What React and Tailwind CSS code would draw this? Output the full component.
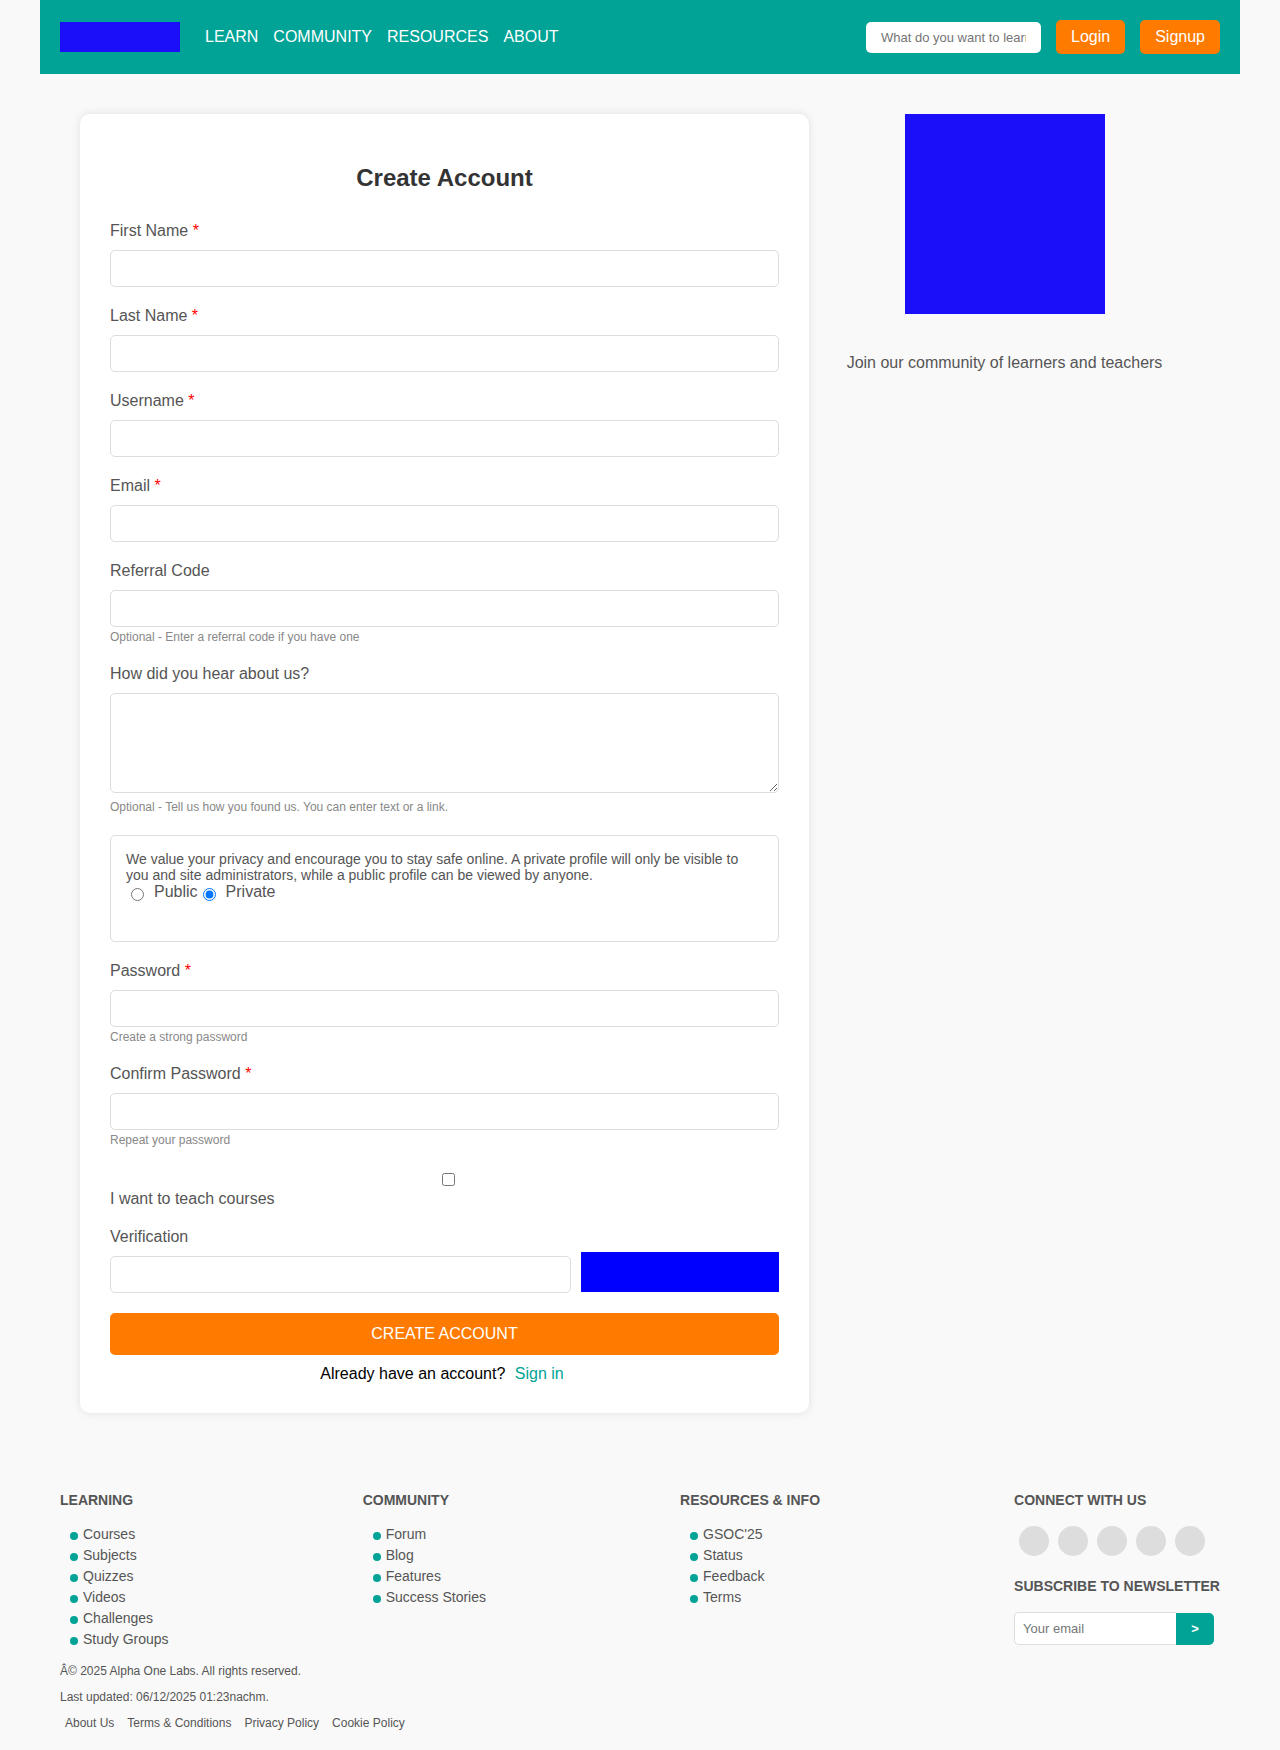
import React from "react";

const NAV_LINKS = ["LEARN", "COMMUNITY", "RESOURCES", "ABOUT"];

const FOOTER_COLUMNS = [
  {
    title: "LEARNING",
    links: ["Courses", "Subjects", "Quizzes", "Videos", "Challenges", "Study Groups"],
  },
  { title: "COMMUNITY", links: ["Forum", "Blog", "Features", "Success Stories"] },
  { title: "RESOURCES & INFO", links: ["GSOC'25", "Status", "Feedback", "Terms"] },
];

const SOCIALS = ["Facebook", "Twitter", "Instagram", "LinkedIn", "GitHub"];

const LEGAL_LINKS = ["About Us", "Terms & Conditions", "Privacy Policy", "Cookie Policy"];

const inputClass =
  "block h-[37px] w-full rounded-[5px] border border-[#dddddd] bg-white px-2.5 text-[13px] text-black";

function Field({ id, label, type = "text", required, hint }) {
  return (
    <div className="mb-5">
      <label htmlFor={id} className="mb-2.5 block">
        {label}
        {required && <span className="text-[#ff0000]"> *</span>}
      </label>
      <input id={id} type={type} required={required} className={inputClass} />
      {hint && <Hint>{hint}</Hint>}
    </div>
  );
}

function Hint({ children }) {
  return <small className="block pt-0.5 text-xs leading-4 text-[#888888]">{children}</small>;
}

function Header() {
  return (
    <header className="flex items-center justify-between bg-[#00a396] p-5 text-white">
      <div className="flex items-center">
        <div role="img" aria-label="Logo" className="h-[30px] w-[120px] bg-[#1b0ff9]" />
        <nav className="ml-[25px] flex gap-[15px]">
          {NAV_LINKS.map((link) => (
            <a key={link} href="#">
              {link}
            </a>
          ))}
        </nav>
      </div>
      <div className="flex items-center gap-[15px]">
        <input
          type="text"
          aria-label="Search"
          placeholder="What do you want to learn?"
          className="h-[31px] w-[175px] rounded-[5px] bg-white px-[15px] text-[13px] text-black placeholder:text-[#757575]"
        />
        <button type="button" className="rounded-[5px] bg-[#ff7b00] px-[15px] py-2">
          Login
        </button>
        <button type="button" className="rounded-[5px] bg-[#ff7b00] px-[15px] py-2">
          Signup
        </button>
      </div>
    </header>
  );
}

function SignupForm() {
  return (
    <form
      onSubmit={(event) => event.preventDefault()}
      className="flex-1 rounded-[10px] bg-white p-[30px] pt-[50px] shadow-[0_0_10px_rgba(0,0,0,0.1)]"
    >
      <h2 className="mb-[30px] text-center text-2xl leading-7 font-bold text-[#333333]">
        Create Account
      </h2>
      <Field id="first-name" label="First Name" required />
      <Field id="last-name" label="Last Name" required />
      <Field id="username" label="Username" required />
      <Field id="email" label="Email" type="email" required />
      <Field
        id="referral"
        label="Referral Code"
        hint="Optional - Enter a referral code if you have one"
      />
      <div className="mb-5">
        <label htmlFor="source" className="mb-2.5 block">
          How did you hear about us?
        </label>
        <textarea
          id="source"
          className="mb-1 block h-[100px] w-full resize rounded-[5px] border border-[#dddddd] bg-white p-2.5 text-[13px] text-black"
        />
        <Hint>Optional - Tell us how you found us. You can enter text or a link.</Hint>
      </div>
      <fieldset className="mb-5 rounded-[5px] border border-[#dddddd] px-[15px] pt-[15px] pb-10">
        <p className="text-sm leading-4">
          We value your privacy and encourage you to stay safe online. A private profile will only
          be visible to you and site administrators, while a public profile can be viewed by anyone.
        </p>
        <div className="flex gap-[5px] pl-[5px]">
          <label className="flex gap-2.5">
            <input type="radio" name="profile" value="public" className="mt-[5px] size-[13px]" />
            Public
          </label>
          <label className="flex gap-2.5">
            <input
              type="radio"
              name="profile"
              value="private"
              defaultChecked
              className="mt-[5px] size-[13px]"
            />
            Private
          </label>
        </div>
      </fieldset>
      <Field
        id="password"
        label="Password"
        type="password"
        required
        hint="Create a strong password"
      />
      <Field
        id="confirm-password"
        label="Confirm Password"
        type="password"
        required
        hint="Repeat your password"
      />
      <div className="mb-5">
        <div className="flex justify-center pt-[5px] pb-1 pl-2">
          <input id="teach" type="checkbox" className="size-[13px]" />
        </div>
        <label htmlFor="teach" className="block">
          I want to teach courses
        </label>
      </div>
      <div className="mb-5 flex items-end gap-2.5">
        <div className="flex-[7]">
          <label htmlFor="verification" className="mb-2.5 block">
            Verification
          </label>
          <input id="verification" type="text" className={inputClass} />
        </div>
        <div
          role="img"
          aria-label="Verification image"
          className="mb-px h-10 flex-[3] bg-[#0000ff]"
        />
      </div>
      <button
        type="submit"
        className="block h-[42px] w-full rounded-[5px] bg-[#ff7b00] text-white"
      >
        CREATE ACCOUNT
      </button>
      <p className="pt-2.5 text-center text-black">
        Already have an account?{" "}
        <a href="#" className="px-[5px] text-[#00a396]">
          Sign in
        </a>
      </p>
    </form>
  );
}

function Footer() {
  return (
    <footer className="px-5 pt-[39px] pb-5 text-sm leading-4">
      <div className="flex items-start justify-between">
        {FOOTER_COLUMNS.map((column) => (
          <section key={column.title}>
            <h4 className="mb-[18px] font-bold">{column.title}</h4>
            <ul className="flex flex-col gap-[5px] pl-2.5">
              {column.links.map((link) => (
                <li key={link} className="flex items-center gap-[5px]">
                  <span className="mt-1 size-2 rounded-full bg-[#00a396]" />
                  <a href="#">{link}</a>
                </li>
              ))}
            </ul>
          </section>
        ))}
        <section>
          <h4 className="mb-[18px] font-bold">CONNECT WITH US</h4>
          <div className="mb-[22px] flex gap-[9px] px-[5px]">
            {SOCIALS.map((name) => (
              <a
                key={name}
                href="#"
                aria-label={name}
                className="size-[30px] rounded-full bg-[#dddddd]"
              />
            ))}
          </div>
          <h4 className="mb-[18px] font-bold">SUBSCRIBE TO NEWSLETTER</h4>
          <form onSubmit={(event) => event.preventDefault()} className="flex items-end">
            <input
              type="email"
              aria-label="Your email"
              placeholder="Your email"
              className="h-[33px] w-[162px] rounded-l-[5px] border border-r-0 border-[#dddddd] bg-white px-2 text-[13px] text-black placeholder:text-[#757575]"
            />
            <button
              type="submit"
              aria-label="Subscribe"
              className="h-8 w-[38px] rounded-r-[5px] bg-[#00a396] text-[13px] font-bold text-white"
            >
              &gt;
            </button>
          </form>
        </section>
      </div>
      <div className="mt-[17px] flex flex-col gap-3 text-xs leading-[14px]">
        <p>Â© 2025 Alpha One Labs. All rights reserved.</p>
        <p>Last updated: 06/12/2025 01:23nachm.</p>
        <nav className="flex gap-[13px] px-[5px]">
          {LEGAL_LINKS.map((link) => (
            <a key={link} href="#">
              {link}
            </a>
          ))}
        </nav>
      </div>
    </footer>
  );
}

export default function App() {
  return (
    <div className="min-h-screen bg-[#f9f9f9] font-['Liberation_Sans',Arial,sans-serif] text-base leading-[18px] text-[#555555]">
      <div className="mx-auto max-w-[1200px]">
        <Header />
        <main className="flex items-start p-10">
          <SignupForm />
          <aside className="flex w-[391px] flex-col items-center gap-10 text-center">
            <div role="img" aria-label="Community" className="size-[200px] bg-[#1b0ff9]" />
            <p>Join our community of learners and teachers</p>
          </aside>
        </main>
        <Footer />
      </div>
    </div>
  );
}
